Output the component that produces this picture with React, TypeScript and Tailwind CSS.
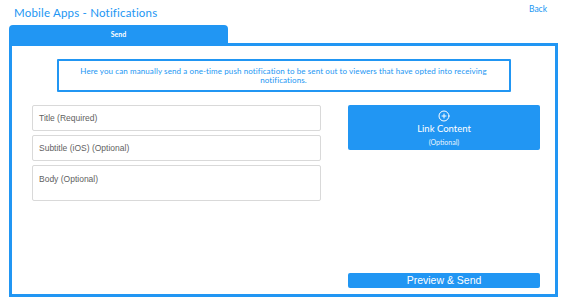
import React from "react";
import { CirclePlus } from "lucide-react";

const blue = "text-[#2196f3]";

const Field: React.FC<{ label: string; tall?: boolean }> = ({ label, tall }) => (
  <div
    className={`border border-[#d9d9d9] rounded-[2px] px-[6px] ${
      tall ? "h-[36px] pt-[7px]" : "h-[26px] flex items-center"
    } text-[8.5px] text-[#5f5f5f] font-['Liberation_Sans',Arial,sans-serif]`}
  >
    {label}
  </div>
);

export default function App() {
  return (
    <div className="w-[565px] h-[305px] bg-white font-['Lato',sans-serif] overflow-hidden">
      <div className="flex justify-between h-[25px] pl-[14px] pr-[18px]">
        <h1 className={`text-[11.5px] leading-none pt-[7px] tracking-[0.2px] ${blue}`}>Mobile Apps - Notifications</h1>
        <a className={`text-[8.5px] leading-none pt-[5px] ${blue}`}>Back</a>
      </div>
      <div className="pl-[9px] pr-[7px]">
        <div className="w-[219px] h-[18px] bg-[#2196f3] rounded-t-[4px] flex items-center justify-center text-white text-[7px] font-bold">
          Send
        </div>
        <div className="h-[254px] border-[3px] border-[#2196f3] flex flex-col">
          <div className="mx-auto mt-[13px] w-[454px] h-[33px] border-2 border-[#2196f3] rounded-[1px] flex flex-col items-center justify-center text-[8px] leading-[9px] text-center text-[#2196f3] px-[20px] tracking-[0.1px]">
            <p>Here you can manually send a one-time push notification to be sent out to viewers that have opted into receiving</p>
            <p>notifications.</p>
          </div>
          <div className="flex flex-1 pl-[20px] pr-[15px] pt-[13px] pb-[6px] gap-[27px]">
            <div className="w-[289px] flex flex-col gap-[4px]">
              <Field label="Title (Required)" />
              <Field label="Subtitle (iOS) (Optional)" />
              <Field label="Body (Optional)" tall />
            </div>
            <div className="flex-1 flex flex-col justify-between">
              <button className="h-[45px] bg-[#2196f3] rounded-[2px] flex flex-col items-center text-white pt-[5px]">
                <CirclePlus size={12} strokeWidth={2} />
                <span className="text-[9.5px] leading-none mt-[2px]">Link Content</span>
                <span className="text-[7px] leading-none mt-[5px] opacity-90">(Optional)</span>
              </button>
              <button className="h-[15px] bg-[#2196f3] rounded-[2px] text-white text-[10.5px] leading-none font-['Liberation_Sans',Arial,sans-serif]">
                Preview &amp; Send
              </button>
            </div>
          </div>
        </div>
      </div>
    </div>
  );
}
